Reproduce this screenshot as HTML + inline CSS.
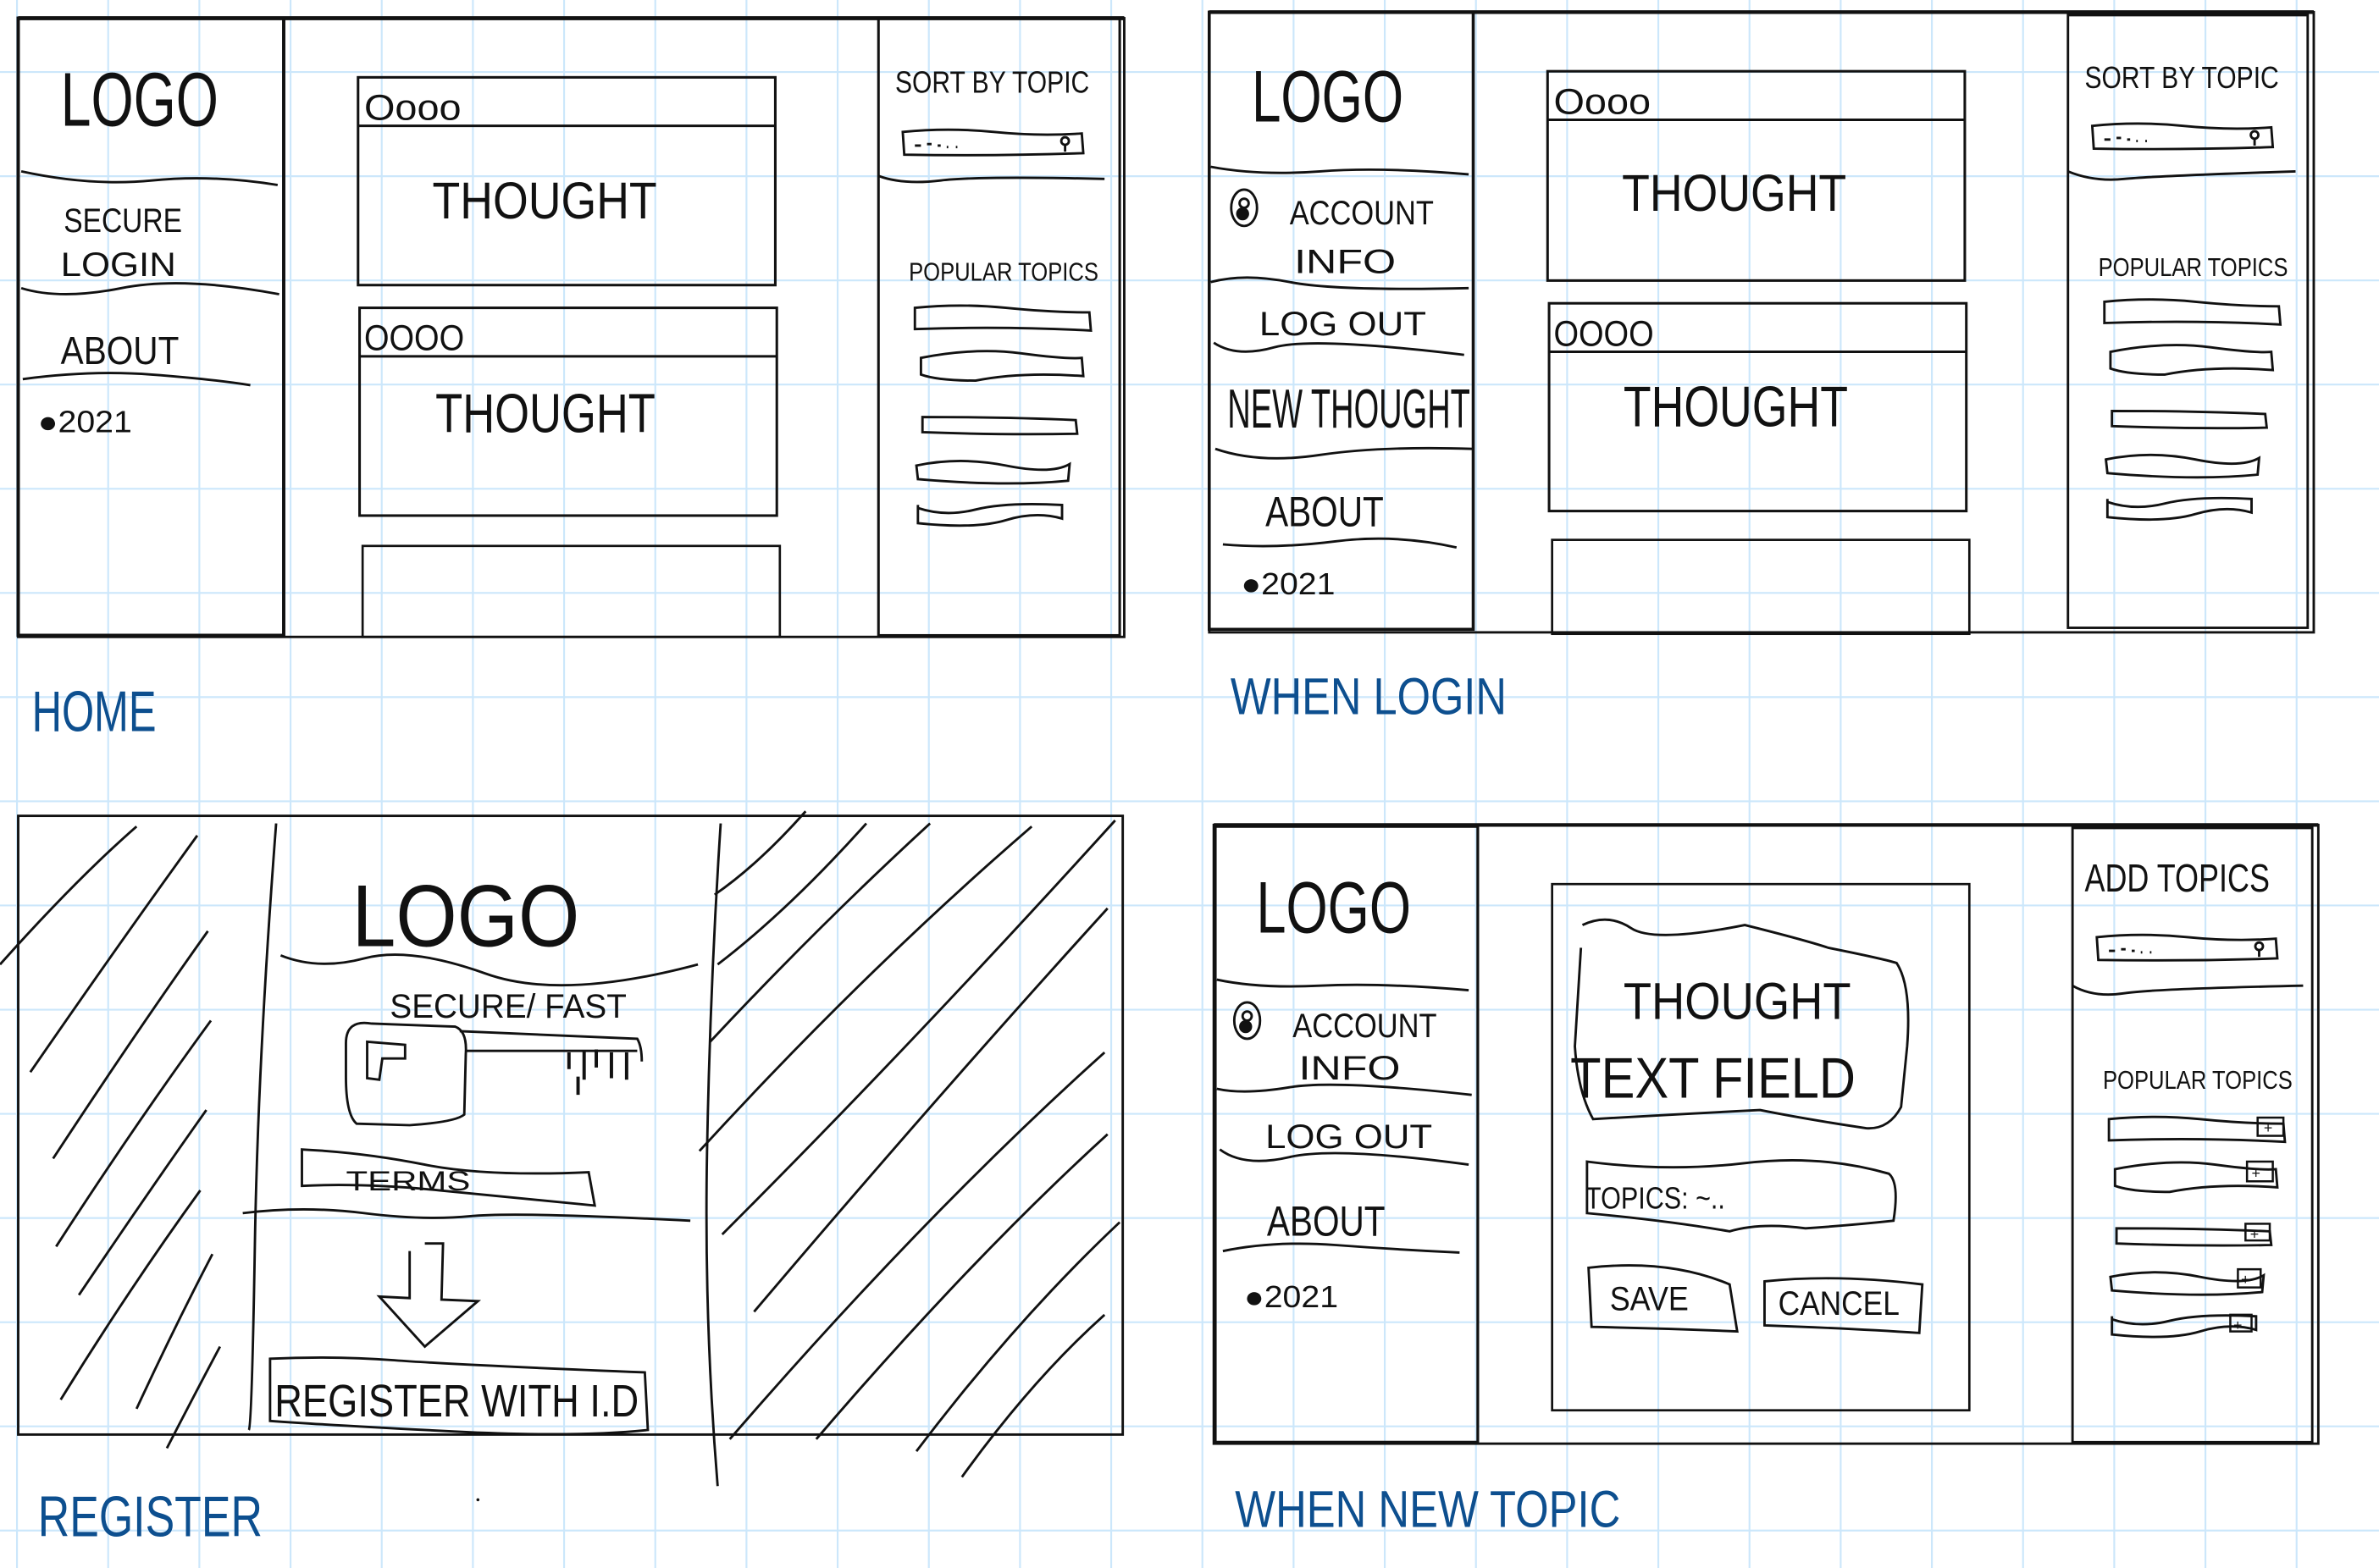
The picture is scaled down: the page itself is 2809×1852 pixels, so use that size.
<!DOCTYPE html>
<html><head><meta charset="utf-8"><style>
html,body{margin:0;padding:0;background:#fff;width:2809px;height:1852px;overflow:hidden}
svg{display:block}
text{font-family:"Liberation Sans",sans-serif;fill:#111}
.b{fill:#0d4f8f}
</style></head><body>
<svg width="2809" height="1852" viewBox="0 0 1568 1034" preserveAspectRatio="none" xmlns="http://www.w3.org/2000/svg">
<rect width="1568" height="1034" fill="#fff"/>
<g stroke="#cce7fb" stroke-width="1.2">
<line x1="11.2" y1="0" x2="11.2" y2="1034"/><line x1="71.3" y1="0" x2="71.3" y2="1034"/><line x1="131.4" y1="0" x2="131.4" y2="1034"/><line x1="191.5" y1="0" x2="191.5" y2="1034"/><line x1="251.6" y1="0" x2="251.6" y2="1034"/><line x1="311.7" y1="0" x2="311.7" y2="1034"/><line x1="371.8" y1="0" x2="371.8" y2="1034"/><line x1="431.9" y1="0" x2="431.9" y2="1034"/><line x1="492" y1="0" x2="492" y2="1034"/><line x1="552.1" y1="0" x2="552.1" y2="1034"/><line x1="612.2" y1="0" x2="612.2" y2="1034"/><line x1="672.3" y1="0" x2="672.3" y2="1034"/><line x1="732.4" y1="0" x2="732.4" y2="1034"/><line x1="792.5" y1="0" x2="792.5" y2="1034"/><line x1="852.6" y1="0" x2="852.6" y2="1034"/><line x1="912.7" y1="0" x2="912.7" y2="1034"/><line x1="972.8" y1="0" x2="972.8" y2="1034"/><line x1="1032.9" y1="0" x2="1032.9" y2="1034"/><line x1="1093" y1="0" x2="1093" y2="1034"/><line x1="1153.1" y1="0" x2="1153.1" y2="1034"/><line x1="1213.2" y1="0" x2="1213.2" y2="1034"/><line x1="1273.3" y1="0" x2="1273.3" y2="1034"/><line x1="1333.4" y1="0" x2="1333.4" y2="1034"/><line x1="1393.5" y1="0" x2="1393.5" y2="1034"/><line x1="1453.6" y1="0" x2="1453.6" y2="1034"/><line x1="1513.7" y1="0" x2="1513.7" y2="1034"/>
<line y1="47.5" x1="0" y2="47.5" x2="1568"/><line y1="116.2" x1="0" y2="116.2" x2="1568"/><line y1="184.9" x1="0" y2="184.9" x2="1568"/><line y1="253.6" x1="0" y2="253.6" x2="1568"/><line y1="322.3" x1="0" y2="322.3" x2="1568"/><line y1="391" x1="0" y2="391" x2="1568"/><line y1="459.7" x1="0" y2="459.7" x2="1568"/><line y1="528.4" x1="0" y2="528.4" x2="1568"/><line y1="597.1" x1="0" y2="597.1" x2="1568"/><line y1="665.8" x1="0" y2="665.8" x2="1568"/><line y1="734.5" x1="0" y2="734.5" x2="1568"/><line y1="803.2" x1="0" y2="803.2" x2="1568"/><line y1="871.9" x1="0" y2="871.9" x2="1568"/><line y1="940.6" x1="0" y2="940.6" x2="1568"/><line y1="1009.3" x1="0" y2="1009.3" x2="1568"/>
</g>

<defs>
<g id="bars" fill="none" stroke="#111" stroke-width="1.6">
<path d="M0,0 Q30,-3 60,0 T115,3 L116,15 Q60,12 0,14 Z"/>
<path d="M4,33 Q40,26 70,30 T110,33 L111,45 Q70,42 40,48 Q15,48 4,44 Z"/>
<path d="M5,72 L5,82 Q60,84 107,83 L106,74 Q60,72 5,72 Z"/>
<path d="M1,104 Q30,98 60,104 T102,103 L101,114 Q60,118 2,113 Z"/>
<path d="M2,130 L2,142 Q40,146 60,140 T97,139 L97,130 Q60,128 40,133 T2,132"/>
</g>
<g id="search" fill="none" stroke="#111" stroke-width="1.6">
<path d="M0,2 Q30,-1 60,2 T118,3 L119,16 Q60,18 1,17 Z"/>
<path d="M8,11 L12,11 M16,10 L19,10 M23,11 L25,11 M29,12 L30,12 M35,12 L36,12"/>
<circle cx="107" cy="8" r="2.5"/><line x1="107" y1="10" x2="107" y2="15"/>
</g>
<g id="user" fill="none" stroke="#111" stroke-width="1.6">
<ellipse cx="0" cy="0" rx="8.5" ry="12"/><circle cx="0" cy="-3" r="3"/><circle cx="-1" cy="4" r="3.5" fill="#111"/>
</g>
</defs>

<!-- ===== HOME ===== -->
<g fill="none" stroke="#111">
<rect x="12" y="12" width="729" height="408" stroke-width="1.6"/>
<line x1="12" y1="12" x2="741" y2="12" stroke-width="2.6"/>
<rect x="12" y="12" width="175" height="407" stroke-width="2.2"/>
<path d="M14,113 Q60,123 100,119 T183,122" stroke-width="1.6"/>
<path d="M14,190 Q40,198 80,190 T184,194" stroke-width="1.6"/>
<path d="M15,250 Q60,244 100,247 T165,254" stroke-width="1.6"/>
<rect x="236" y="51" width="275" height="137" stroke-width="1.7"/>
<line x1="236" y1="83" x2="511" y2="83" stroke-width="1.7"/>
<rect x="237" y="203" width="275" height="137" stroke-width="1.7"/>
<line x1="237" y1="235" x2="512" y2="235" stroke-width="1.7"/>
<rect x="239" y="360" width="275" height="60" stroke-width="1.5"/>
<rect x="579" y="12" width="159" height="407" stroke-width="1.7"/>
<path d="M579,116 Q595,122 620,119 T728,118" stroke-width="1.6"/>
</g>
<text x="40" y="83" font-size="50" textLength="104" lengthAdjust="spacingAndGlyphs">LOGO</text>
<text x="42" y="153" font-size="22" textLength="78" lengthAdjust="spacingAndGlyphs">SECURE</text>
<text x="40" y="182" font-size="22" textLength="76" lengthAdjust="spacingAndGlyphs">LOGIN</text>
<text x="40" y="240" font-size="26" textLength="78" lengthAdjust="spacingAndGlyphs">ABOUT</text>
<text x="25" y="285" font-size="20" textLength="62" lengthAdjust="spacingAndGlyphs">●2021</text>
<text x="240" y="79" font-size="24" textLength="64" lengthAdjust="spacingAndGlyphs">Oooo</text>
<text x="285" y="144" font-size="34" textLength="148" lengthAdjust="spacingAndGlyphs">THOUGHT</text>
<text x="240" y="231" font-size="24" textLength="66" lengthAdjust="spacingAndGlyphs">OOOO</text>
<text x="287" y="285" font-size="36" textLength="145" lengthAdjust="spacingAndGlyphs">THOUGHT</text>
<text x="590" y="61" font-size="20" textLength="128" lengthAdjust="spacingAndGlyphs">SORT BY TOPIC</text>
<use href="#search" x="595" y="85"/>
<text x="599" y="185" font-size="17" textLength="125" lengthAdjust="spacingAndGlyphs">POPULAR TOPICS</text>
<use href="#bars" x="603" y="203"/>
<text class="b" x="21" y="482" font-size="38" textLength="82" lengthAdjust="spacingAndGlyphs">HOME</text>

<!-- ===== WHEN LOGIN ===== -->
<g fill="none" stroke="#111">
<rect x="797" y="8" width="728" height="409" stroke-width="1.6"/>
<line x1="797" y1="8" x2="1525" y2="8" stroke-width="2.4"/>
<rect x="797" y="8" width="174" height="407" stroke-width="2"/>
<path d="M798,110 Q830,116 870,113 T968,115" stroke-width="1.6"/>
<path d="M798,186 Q820,180 850,186 T968,190" stroke-width="1.6"/>
<path d="M800,226 Q815,236 840,229 T965,234" stroke-width="1.6"/>
<path d="M801,296 Q830,306 870,300 T971,296" stroke-width="1.6"/>
<path d="M806,359 Q840,362 880,357 T960,361" stroke-width="1.6"/>
<rect x="1020" y="47" width="275" height="138" stroke-width="1.7"/>
<line x1="1020" y1="79" x2="1295" y2="79" stroke-width="1.7"/>
<rect x="1021" y="200" width="275" height="137" stroke-width="1.7"/>
<line x1="1021" y1="232" x2="1296" y2="232" stroke-width="1.7"/>
<rect x="1023" y="356" width="275" height="62" stroke-width="1.5"/>
<rect x="1363" y="10" width="158" height="404" stroke-width="1.6"/>
<path d="M1363,113 Q1380,120 1400,118 T1513,113" stroke-width="1.6"/>
</g>
<use href="#user" x="820" y="137"/>
<text x="825" y="80" font-size="48" textLength="100" lengthAdjust="spacingAndGlyphs">LOGO</text>
<text x="850" y="148" font-size="22" textLength="95" lengthAdjust="spacingAndGlyphs">ACCOUNT</text>
<text x="853" y="180" font-size="22" textLength="67" lengthAdjust="spacingAndGlyphs">INFO</text>
<text x="830" y="221" font-size="22" textLength="110" lengthAdjust="spacingAndGlyphs">LOG OUT</text>
<text x="809" y="282" font-size="36" textLength="160" lengthAdjust="spacingAndGlyphs">NEW THOUGHT</text>
<text x="834" y="347" font-size="28" textLength="78" lengthAdjust="spacingAndGlyphs">ABOUT</text>
<text x="818" y="392" font-size="20" textLength="62" lengthAdjust="spacingAndGlyphs">●2021</text>
<text x="1024" y="75" font-size="24" textLength="64" lengthAdjust="spacingAndGlyphs">Oooo</text>
<text x="1069" y="139" font-size="34" textLength="148" lengthAdjust="spacingAndGlyphs">THOUGHT</text>
<text x="1024" y="228" font-size="24" textLength="66" lengthAdjust="spacingAndGlyphs">OOOO</text>
<text x="1070" y="281" font-size="38" textLength="148" lengthAdjust="spacingAndGlyphs">THOUGHT</text>
<text x="1374" y="58" font-size="20" textLength="128" lengthAdjust="spacingAndGlyphs">SORT BY TOPIC</text>
<use href="#search" x="1379" y="81"/>
<text x="1383" y="182" font-size="17" textLength="125" lengthAdjust="spacingAndGlyphs">POPULAR TOPICS</text>
<use href="#bars" x="1387" y="199"/>
<text class="b" x="811" y="471" font-size="34" textLength="182" lengthAdjust="spacingAndGlyphs">WHEN  LOGIN</text>

<!-- ===== REGISTER ===== -->
<g fill="none" stroke="#111" stroke-width="1.6">
<rect x="12" y="538" width="728" height="408"/>
<path d="M182,543 Q170,700 168,820 T164,943"/>
<path d="M475,543 Q468,650 466,760 T473,980"/>
<path d="M0,636 Q50,580 90,545 M20,707 Q80,620 130,551 M35,764 Q90,680 137,614 M37,822 Q90,740 139,673 M52,854 Q95,790 136,732 M40,923 Q85,850 132,785 M90,929 Q115,875 140,827 M110,955 Q128,920 145,888"/>
<path d="M471,590 Q500,570 531,535 M473,636 Q520,600 571,543 M468,687 Q540,610 613,543 M461,759 Q570,640 680,545 M476,814 Q600,690 735,541 M497,865 Q620,720 730,599 M481,949 Q610,800 728,694 M538,949 Q640,830 730,748 M604,957 Q670,870 738,806 M634,974 Q680,910 728,867"/>
<path d="M185,630 Q210,640 240,632 T320,642 T460,636"/>
<path d="M228,688 Q228,672 245,675 L300,677 Q308,680 307,695 L306,735 Q300,740 270,742 L235,741 Q228,735 228,710 Z"/>
<path d="M242,687 L267,689 L267,698 L252,698 L250,712 L242,711 Z"/>
<path d="M307,693 L420,693 M303,680 L420,685 Q423,690 423,700"/>
<path d="M375,694 L375,705 M385,693 L385,712 M393,692 L393,704 M403,694 L403,711 M413,694 L413,712 M381,710 L381,722" stroke-width="2.2"/>
<path d="M199,758 Q240,760 280,768 T388,773 L392,795 Q340,790 290,785 T199,782 Z"/>
<path d="M160,800 Q200,795 240,800 T310,802 T455,805"/>
<path d="M280,820 L292,820 L291,857 L315,858 L280,888 L250,855 L270,856 L270,825"/>
<path d="M178,896 Q220,894 260,897 T425,905 L427,943 Q380,948 300,944 T178,937 Z"/>
</g>
<circle cx="315" cy="989" r="1" fill="#111"/>
<text x="232" y="624" font-size="58" textLength="150" lengthAdjust="spacingAndGlyphs">LOGO</text>
<text x="257" y="671" font-size="22" textLength="156" lengthAdjust="spacingAndGlyphs">SECURE/ FAST</text>
<text x="228" y="785" font-size="18" textLength="82" lengthAdjust="spacingAndGlyphs">TERMS</text>
<text x="181" y="934" font-size="30" textLength="240" lengthAdjust="spacingAndGlyphs">REGISTER WITH I.D</text>
<text class="b" x="25" y="1013" font-size="38" textLength="148" lengthAdjust="spacingAndGlyphs">REGISTER</text>

<!-- ===== WHEN NEW TOPIC ===== -->
<g fill="none" stroke="#111">
<rect x="800" y="544" width="728" height="408" stroke-width="1.6"/>
<line x1="800" y1="544" x2="1528" y2="544" stroke-width="2.4"/>
<rect x="801" y="545" width="173" height="406" stroke-width="1.8"/>
<path d="M802,646 Q830,652 870,650 T968,653" stroke-width="1.6"/>
<path d="M802,718 Q820,722 850,717 T970,722" stroke-width="1.6"/>
<path d="M804,758 Q820,770 850,763 T968,768" stroke-width="1.6"/>
<path d="M806,825 Q840,818 880,821 T962,826" stroke-width="1.6"/>
<rect x="1023" y="583" width="275" height="347" stroke-width="1.5"/>
<path d="M1043,610 Q1060,602 1075,612 T1150,610 Q1190,620 1205,625 Q1240,632 1250,635 Q1260,650 1257,690 L1253,730 Q1245,745 1230,744 Q1190,738 1160,732 Q1100,735 1050,738 Q1040,720 1038,690 L1042,625" stroke-width="1.6"/>
<path d="M1046,766 Q1100,773 1150,767 T1245,774 Q1252,780 1248,805 Q1220,808 1190,810 Q1160,806 1140,812 Q1100,805 1046,800 Z" stroke-width="1.6"/>
<path d="M1047,836 Q1100,830 1140,847 L1145,878 Q1100,876 1049,875 Z" stroke-width="1.6"/>
<path d="M1163,845 Q1210,840 1267,847 L1265,879 Q1220,876 1163,874 Z" stroke-width="1.6"/>
<rect x="1366" y="546" width="158" height="405" stroke-width="1.6"/>
<path d="M1366,650 Q1380,658 1400,655 T1518,650" stroke-width="1.6"/>
</g>
<use href="#bars" x="1390" y="738"/>
<g fill="none" stroke="#111" stroke-width="1.4">
<rect x="1488" y="737" width="17" height="12"/><rect x="1481" y="766" width="17" height="13"/><rect x="1480" y="807" width="16" height="11"/><rect x="1475" y="837" width="15" height="12"/><rect x="1470" y="867" width="14" height="11"/>
</g>
<g font-size="10"><text x="1492" y="747">+</text><text x="1484" y="777">+</text><text x="1483" y="817">+</text><text x="1477" y="847">+</text><text x="1472" y="877">+</text></g>
<use href="#user" x="822" y="673"/>
<text x="828" y="615" font-size="48" textLength="102" lengthAdjust="spacingAndGlyphs">LOGO</text>
<text x="852" y="684" font-size="22" textLength="95" lengthAdjust="spacingAndGlyphs">ACCOUNT</text>
<text x="856" y="712" font-size="22" textLength="67" lengthAdjust="spacingAndGlyphs">INFO</text>
<text x="834" y="757" font-size="22" textLength="110" lengthAdjust="spacingAndGlyphs">LOG OUT</text>
<text x="835" y="815" font-size="28" textLength="78" lengthAdjust="spacingAndGlyphs">ABOUT</text>
<text x="820" y="862" font-size="20" textLength="62" lengthAdjust="spacingAndGlyphs">●2021</text>
<text x="1070" y="672" font-size="34" textLength="150" lengthAdjust="spacingAndGlyphs">THOUGHT</text>
<text x="1035" y="724" font-size="38" textLength="188" lengthAdjust="spacingAndGlyphs">TEXT FIELD</text>
<text x="1045" y="797" font-size="20" textLength="92" lengthAdjust="spacingAndGlyphs">TOPICS: ~..</text>
<text x="1061" y="864" font-size="22" textLength="52" lengthAdjust="spacingAndGlyphs">SAVE</text>
<text x="1172" y="867" font-size="22" textLength="80" lengthAdjust="spacingAndGlyphs">CANCEL</text>
<text x="1374" y="588" font-size="26" textLength="122" lengthAdjust="spacingAndGlyphs">ADD TOPICS</text>
<use href="#search" x="1382" y="616"/>
<text x="1386" y="718" font-size="17" textLength="125" lengthAdjust="spacingAndGlyphs">POPULAR TOPICS</text>
<text class="b" x="814" y="1007" font-size="34" textLength="254" lengthAdjust="spacingAndGlyphs">WHEN  NEW TOPIC</text>
</svg>
</body></html>
